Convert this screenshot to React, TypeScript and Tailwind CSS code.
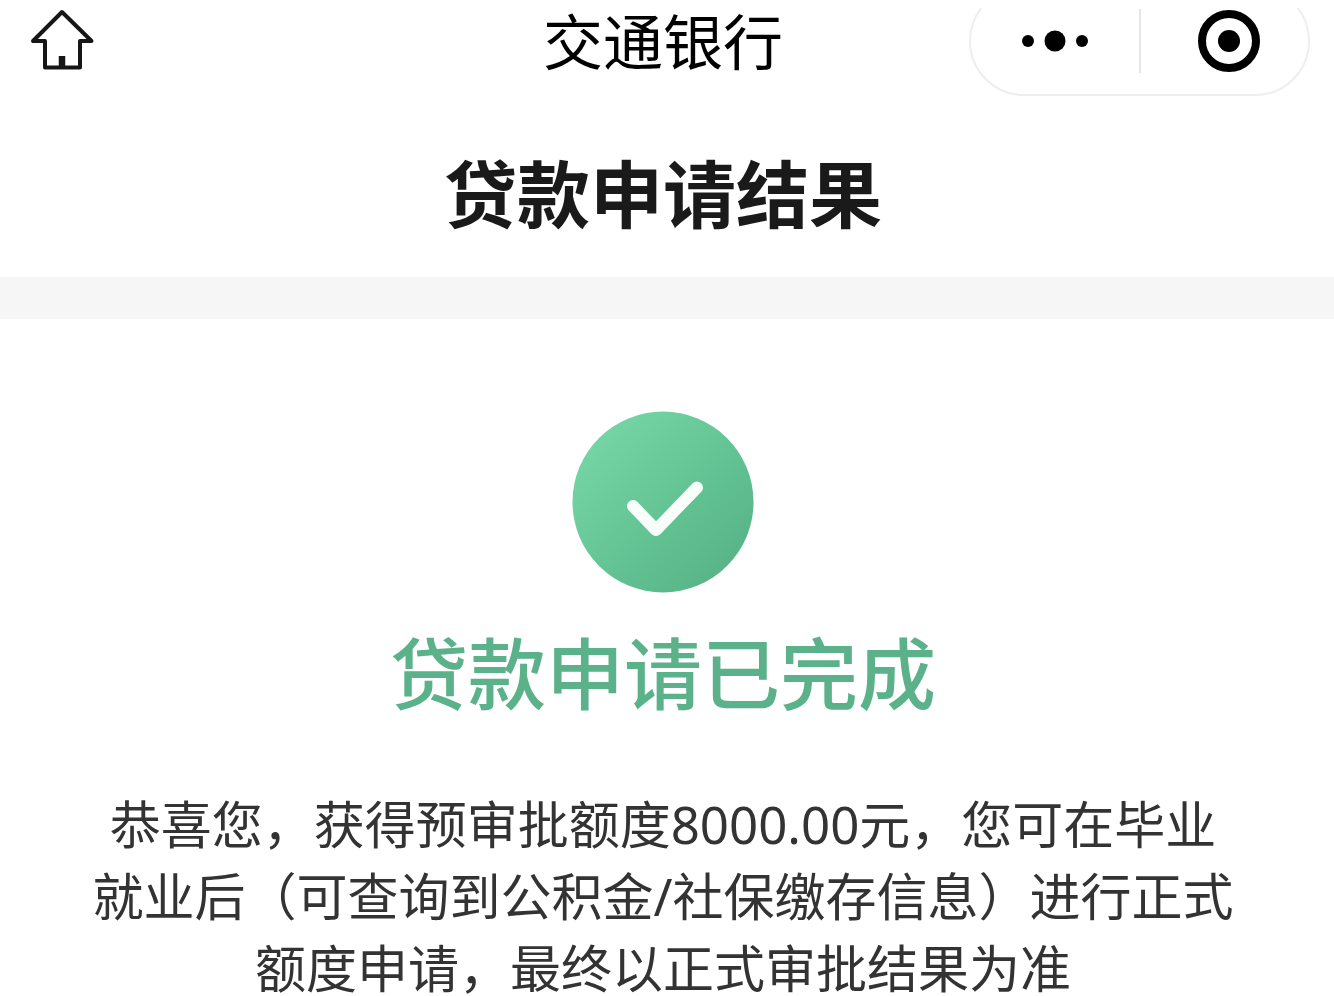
function HomeIcon() {
  return (
    <svg className="h-[66px] w-[66px]" viewBox="0 0 66 66" fill="none" stroke="#161616" strokeWidth={4} strokeLinejoin="round">
      <path d="M33 5L4 34h12v26.500h35V34h11.500z" />
      <path d="M33 49v11" strokeWidth={6.500} />
    </svg>
  )
}

function MoreIcon() {
  return (
    <svg className="h-6 w-[68px]" viewBox="0 0 68 24" fill="#000">
      <circle cx="7" cy="12" r="6" />
      <circle cx="34" cy="12" r="10.500" />
      <circle cx="61" cy="12" r="6" />
    </svg>
  )
}

function TargetIcon() {
  return (
    <svg className="h-16 w-16" viewBox="0 0 64 64">
      <circle cx="32" cy="32" r="27" fill="none" stroke="#000" strokeWidth={8} />
      <circle cx="32" cy="32" r="11" fill="#000" />
    </svg>
  )
}

function SuccessIcon() {
  return (
    <svg className="h-[182px] w-[182px]" viewBox="0 0 182 182" fill="none">
      <defs>
        <linearGradient id="success" x1="0.1" y1="0.15" x2="0.85" y2="0.9">
          <stop offset="0" stopColor="#75d5a5" />
          <stop offset="0.5" stopColor="#65c595" />
          <stop offset="1" stopColor="#57b488" />
        </linearGradient>
      </defs>
      <circle cx="91" cy="91" r="90.500" fill="url(#success)" />
      <path d="M61 95l23 24 41-42.500" stroke="#f8fffb" strokeWidth={12} strokeLinecap="round" strokeLinejoin="round" />
    </svg>
  )
}

export default function App() {
  return (
    <div className="min-h-screen bg-white font-['Noto_Sans','Noto_Sans_CJK_SC',sans-serif]" lang="zh-CN">
      {/* Nav bar */}
      <header className="grid grid-cols-[1fr_auto_1fr] pt-2 pr-6 pl-4">
        <button type="button" aria-label="首页" className="flex h-16 w-[92px] items-center justify-center">
          <HomeIcon />
        </button>
        <div className="text-[60px] leading-[68px] text-black">交通银行</div>
        <div className="flex h-[88px] items-end justify-end overflow-hidden">
          <div className="flex h-[110px] w-[341px] shrink-0 items-center rounded-full border-2 border-[#eeeeee]">
            <button type="button" aria-label="更多" className="flex w-[168px] shrink-0 items-center justify-center">
              <MoreIcon />
            </button>
            <div className="h-16 w-[2px] bg-[#e6e6e6]" />
            <button type="button" aria-label="关闭" className="flex flex-1 items-center justify-center pl-2">
              <TargetIcon />
            </button>
          </div>
        </div>
      </header>

      <h1 className="pt-12 pr-2 pb-[33px] text-center text-[73px] leading-[100px] font-bold text-[#1a1a1a]">贷款申请结果</h1>
      <div className="h-[42px] bg-[#f6f6f6]" />

      {/* Result */}
      <main className="flex flex-col items-center pt-[92px] pr-[98px] pl-[90px] text-center">
        <SuccessIcon />
        <h2 className="mt-8 text-[78px] leading-[99px] font-medium text-[#5bb18a]">贷款申请已完成</h2>
        <p className="mt-16 text-[51px] leading-[72px] text-[#333333]">
          恭喜您，获得预审批额度8000.00元，您可在毕业就业后（可查询到公积金/社保缴存信息）进行正式额度申请，最终以正式审批结果为准
        </p>
      </main>
    </div>
  )
}
